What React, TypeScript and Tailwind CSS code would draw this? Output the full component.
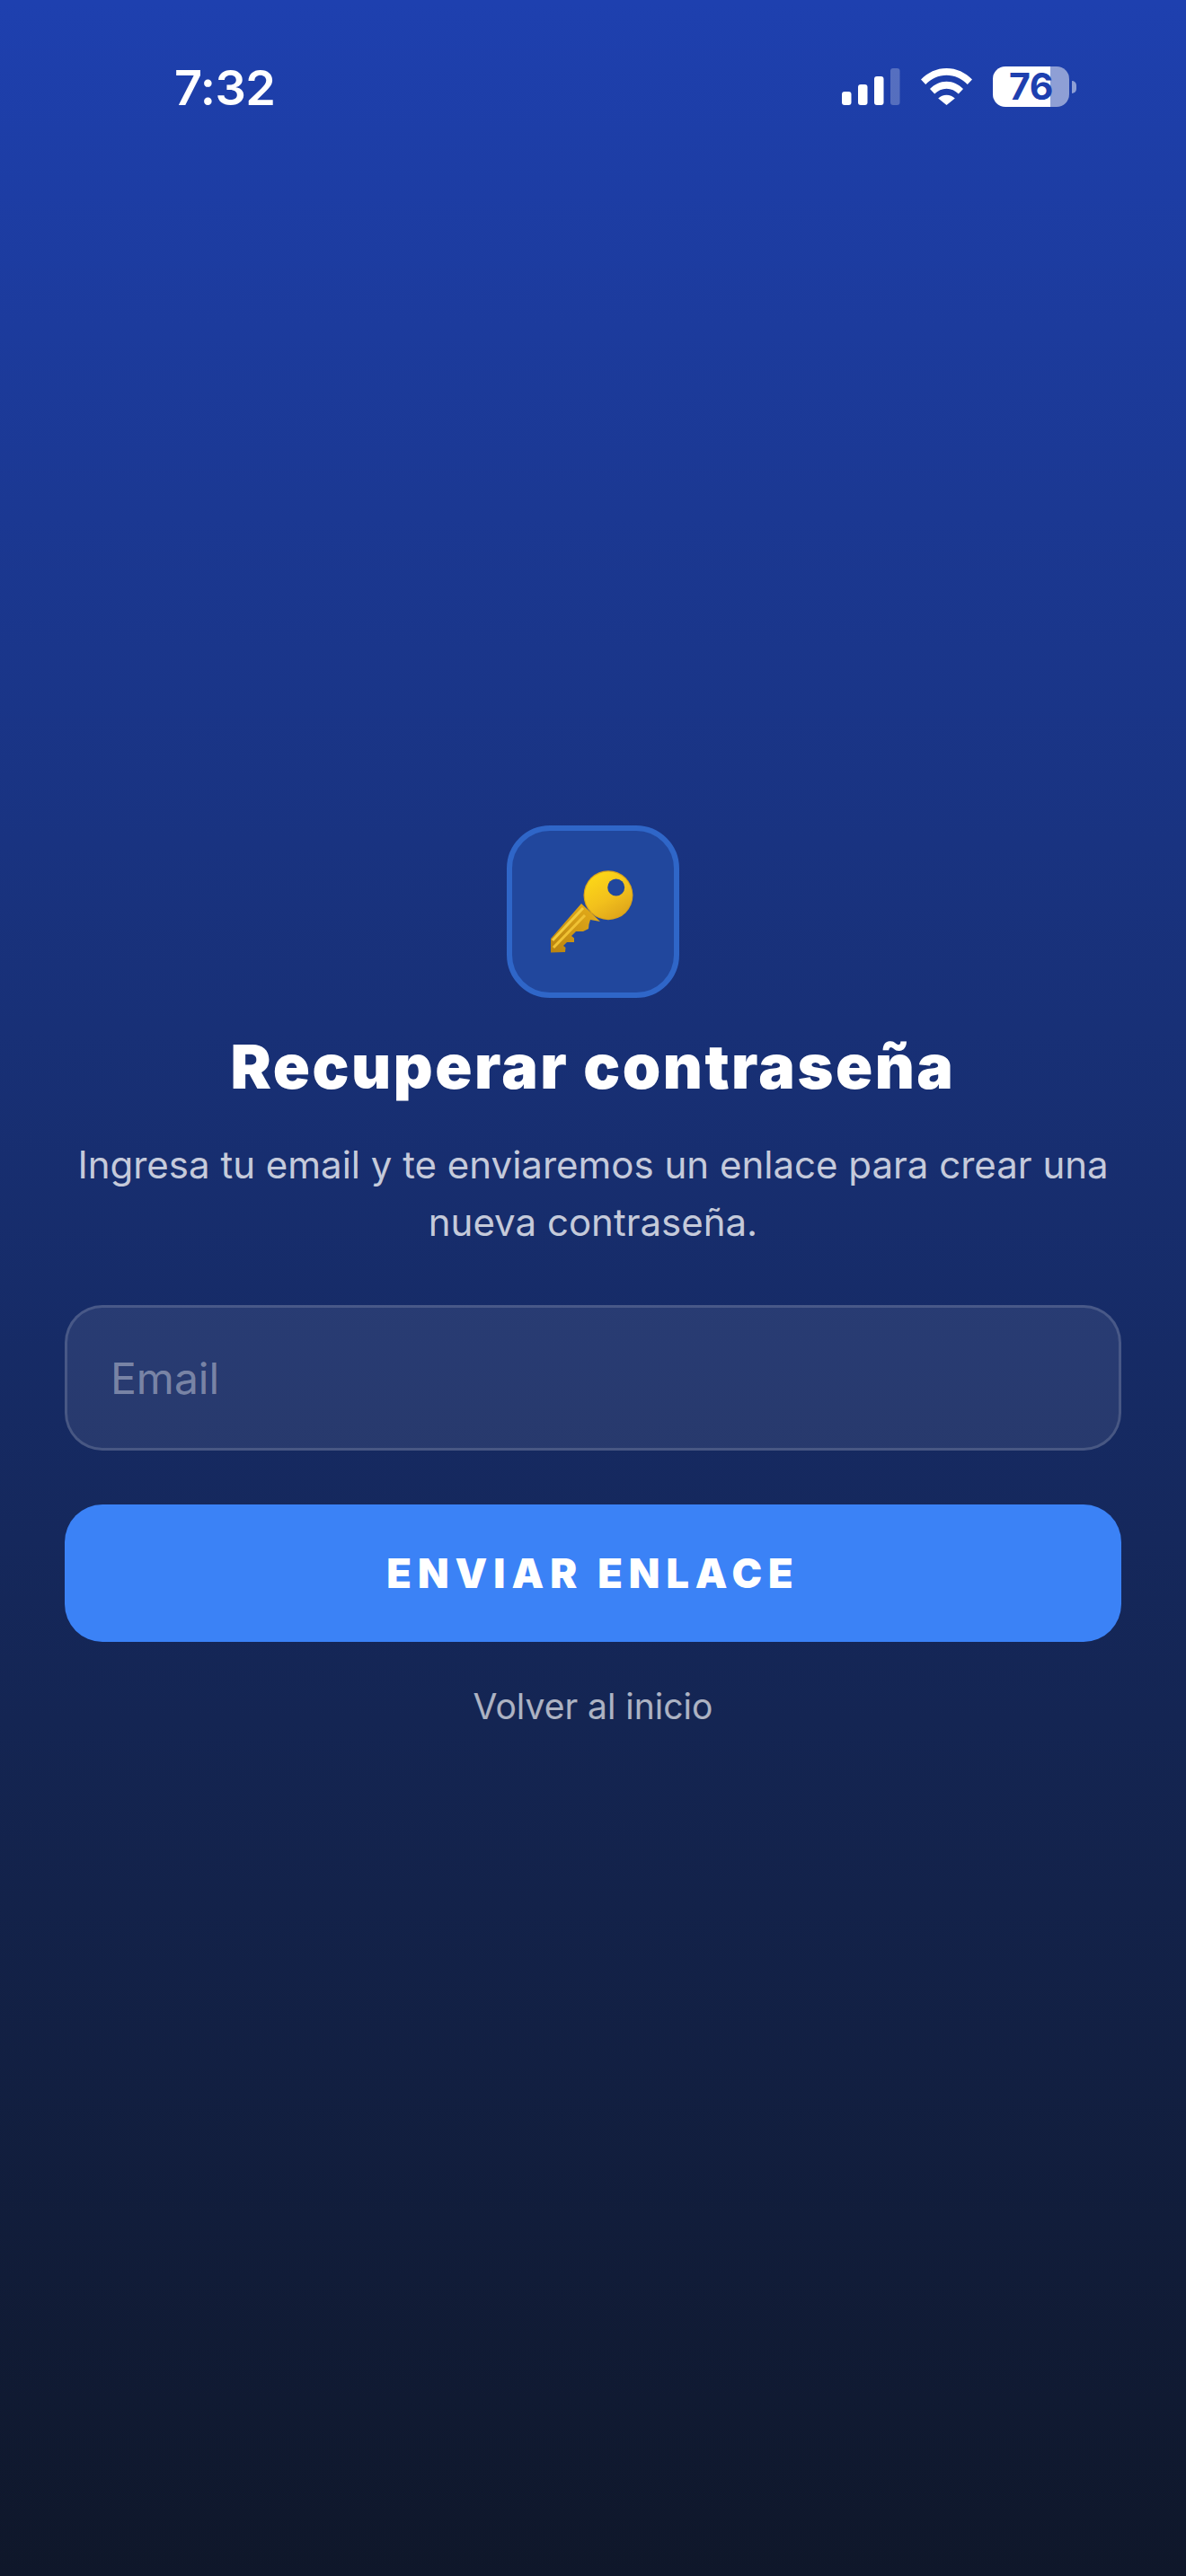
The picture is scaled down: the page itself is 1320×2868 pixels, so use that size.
export default function App() {
  return (
    <div className="flex h-[2868px] w-[1320px] flex-col overflow-hidden bg-gradient-to-b from-[#1e40af] to-[#0f172a] font-['Inter',sans-serif] text-white">
      <div className="flex h-[198px] shrink-0 items-start justify-between pl-[194px] pr-[122px] pt-[74px]">
        <span className="text-[54px] font-semibold leading-[48px] tracking-[-0.5px]">7:32</span>
        <div className="flex items-start">
          <svg width="65" height="41" viewBox="0 0 65 41" className="mt-[2px]" fill="#fff">
            <rect x="0" y="26" width="10.5" height="15" rx="3" />
            <rect x="18" y="18" width="10.5" height="23" rx="3" />
            <rect x="36" y="9" width="10.5" height="32" rx="3" />
            <rect x="54" y="0" width="10.5" height="41" rx="3" opacity="0.25" />
          </svg>
          <svg width="57" height="41" viewBox="0 0 57 41" className="ml-[23px] mt-[2px]" fill="#fff">
            <path d="M0 12.5C7.5 4.8 17.5 0 28.5 0S49.5 4.8 57 12.5L51.8 18C45.7 11.6 37.5 7.8 28.5 7.8S11.3 11.6 5.2 18Z" />
            <path d="M10 23C15 18 21.4 14.8 28.5 14.8S42 18 47 23L41.8 28.6C38.3 25 33.6 22.7 28.5 22.7S18.7 25 15.2 28.6Z" />
            <path d="M19.2 33.6C21.6 31.2 24.9 29.7 28.5 29.7S35.4 31.2 37.8 33.6L28.5 41Z" />
          </svg>
          <div className="ml-[23px] flex items-center">
            <div className="relative flex h-[45px] w-[85px]">
              <div className="w-[64px] rounded-l-[14px] bg-white" />
              <div className="flex-1 rounded-r-[14px] bg-white/50" />
              <span className="absolute inset-0 flex items-center justify-center text-[41px] font-bold leading-[45px] tracking-[-0.5px] text-[#1e40af]">76</span>
            </div>
            <div className="ml-[3px] h-[14px] w-[5px] rounded-r-[5px] bg-white/50" />
          </div>
        </div>
      </div>

      <div className="mt-[721px] flex flex-col items-center px-[72px]">
        <div className="flex h-[192px] w-[192px] items-center justify-center rounded-[48px] border-[6px] border-[#2f66c8] bg-[#21479d]">
          <svg width="92" height="92" viewBox="0 0 92 92" className="mr-[2px]">
            <defs>
              <linearGradient id="keyh" x1="0.2" y1="0" x2="0.8" y2="1">
                <stop offset="0" stopColor="#fdd917" />
                <stop offset="0.55" stopColor="#f2c01c" />
                <stop offset="1" stopColor="#dca21a" />
              </linearGradient>
              <linearGradient id="keys" x1="1" y1="0" x2="0" y2="1">
                <stop offset="0" stopColor="#e8b01a" />
                <stop offset="1" stopColor="#b98310" />
              </linearGradient>
            </defs>
            <path d="M34 37L0 76L0 91.5L16 91L16.5 86L14 84L18 80L26 80L26 75.5L23 73L28 68L36 68L42 65L42.5 60L44 55L55 57Z" fill="url(#keys)" />
            <path d="M36 42L2 78" stroke="#f3cb3c" strokeWidth="3" fill="none" />
            <path d="M3 86L38 50" stroke="#f0c233" strokeWidth="3" fill="none" />
            <circle cx="64" cy="27.7" r="27.5" fill="#d9a21a" />
            <circle cx="64" cy="27.7" r="26.3" fill="url(#keyh)" />
            <circle cx="72.7" cy="19" r="9.5" fill="#21479d" />
          </svg>
        </div>

        <h1 className="mt-[36px] text-center text-[68px] font-black leading-[80px] tracking-[2.5px]">Recuperar contraseña</h1>
        <p className="mt-[38px] w-full text-center text-[42px] font-normal leading-[64px] text-white/75">
          Ingresa tu email y te enviaremos un enlace para crear una nueva contraseña.
        </p>

        <input
          type="text"
          placeholder="Email"
          className="mt-[60px] h-[162px] w-full rounded-[42px] border-[3px] border-white/15 bg-white/[0.08] px-[48px] text-[48px] text-white outline-none placeholder:text-white/40"
        />

        <button className="mt-[60px] flex h-[153px] w-full items-center justify-center rounded-[42px] bg-[#3b82f6] text-[45px] font-black tracking-[7px] text-white">
          ENVIAR ENLACE
        </button>

        <a className="mt-[47px] text-[39px] leading-[50px] text-white/65">Volver al inicio</a>
      </div>
    </div>
  );
}
